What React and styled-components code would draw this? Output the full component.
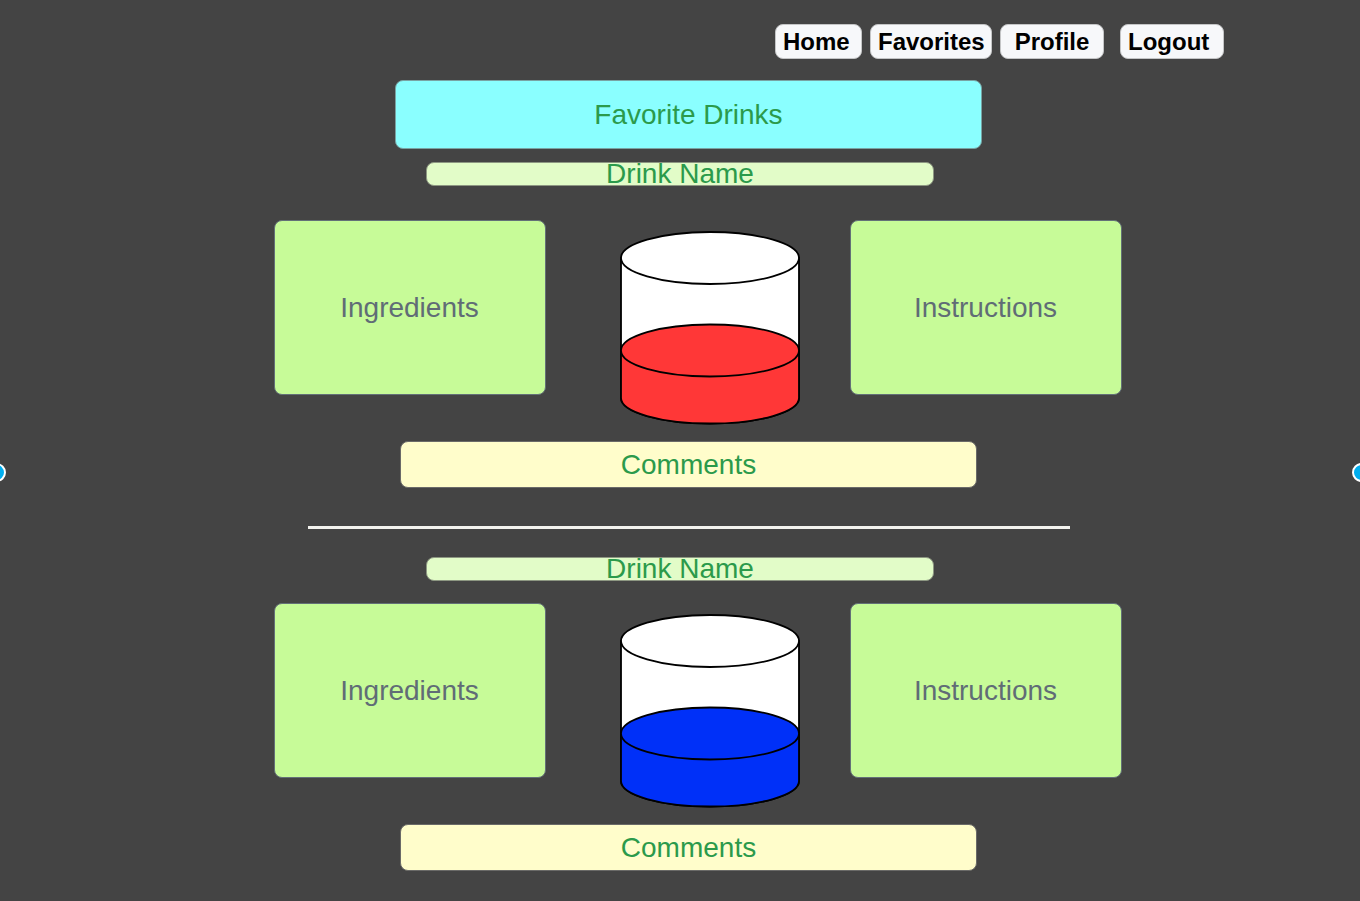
import React from "react";
import styled, { createGlobalStyle } from "styled-components";

const GlobalStyle = createGlobalStyle`
  *, *::before, *::after {
    box-sizing: border-box;
  }
  body {
    margin: 0;
    background: #444444;
    font-family: "Liberation Sans", Arial, Helvetica, sans-serif;
  }
`;

const Page = styled.div`
  position: relative;
  min-height: 100vh;
  padding: 24px 0 30px;
  overflow: hidden;
  background: #444444;
`;

const Nav = styled.nav`
  display: flex;
  justify-content: flex-end;
  gap: 8px;
  padding-right: 10%;
`;

const NavLink = styled.a`
  width: ${({ $width }) => $width}px;
  height: 35px;
  padding: 0 ${({ $align }) => ($align === "center" ? 0 : 7)}px;
  margin-left: ${({ $apart }) => ($apart ? 8 : 0)}px;
  border: 1px solid #c4c5c6;
  border-radius: 8px;
  background: #f7f8fa;
  color: #000000;
  font-size: 24px;
  font-weight: 700;
  line-height: 34px;
  text-align: ${({ $align }) => $align || "left"};
  text-decoration: none;
  white-space: nowrap;
`;

const Main = styled.main`
  display: flex;
  flex-direction: column;
  align-items: center;
  padding: 21px 0 0 17px;
`;

const Bar = styled.div`
  display: flex;
  align-items: center;
  justify-content: center;
  width: 100%;
  border: 1px solid #6a6a68;
  border-radius: 8px;
  color: #2b9a4b;
  font-size: 28px;
  font-weight: 400;
  line-height: 32px;
  white-space: nowrap;
`;

const Title = styled(Bar).attrs({ as: "h1" })`
  max-width: 587px;
  height: 69px;
  margin: 0 0 13px;
  background: #8affff;
  border-color: #79a3a3;
`;

const DrinkName = styled(Bar).attrs({ as: "h2" })`
  max-width: 508px;
  height: 24px;
  margin: 0;
  background: #e2fcc8;
  border-color: #8d9782;
`;

const Comments = styled(Bar)`
  max-width: 577px;
  height: 47px;
  background: #fffdcb;
`;

const Drink = styled.section`
  display: flex;
  flex-direction: column;
  align-items: center;
  width: 100%;
`;

const NameRow = styled.div`
  display: flex;
  justify-content: center;
  width: 100%;
  padding-right: 17px;
`;

const Recipe = styled.div`
  display: grid;
  grid-template-columns: 272px 1fr 272px;
  align-items: start;
  width: 100%;
  max-width: 866px;
  padding-left: 18px;
  margin: ${({ $top }) => $top}px 0 17px;
`;

const Card = styled.div`
  display: flex;
  align-items: center;
  justify-content: center;
  height: 175px;
  border: 1px solid #637077;
  border-radius: 8px;
  background: #c7fb98;
  color: #606c76;
  font-size: 28px;
  line-height: 32px;
`;

const GlassSlot = styled.div`
  display: flex;
  justify-content: center;
  padding: 11px 0 0 25px;
`;

const GlassDrawing = styled.svg`
  display: block;
  flex: none;
  overflow: visible;
  stroke: #000000;
  stroke-width: 1.8;
`;

const Divider = styled.hr`
  width: 100%;
  max-width: 762px;
  height: 3px;
  margin: 38px 0 28px;
  border: 0;
  background: #f2f2ee;
`;

const Handle = styled.span`
  position: absolute;
  top: 463px;
  ${({ $side }) => $side}: ${({ $side }) => ($side === "left" ? -13 : -11)}px;
  width: 19px;
  height: 19px;
  border: 2px solid #ffffff;
  border-radius: 50%;
  background: #00aeef;
`;

function Glass({ color, label }) {
  return (
    <GlassDrawing width="180" height="193" viewBox="0 0 180 193" role="img" aria-label={label}>
      <path d="M1 27V167A89 25.5 0 0 0 179 167V27Z" fill="#ffffff" />
      <path d="M1 119.500V167A89 25.500 0 0 0 179 167V119.500Z" fill={color} />
      <ellipse cx="90" cy="119.500" rx="89" ry="26" fill={color} />
      <ellipse cx="90" cy="27" rx="89" ry="26" fill="#ffffff" />
    </GlassDrawing>
  );
}

function DrinkEntry({ color, label, top }) {
  return (
    <Drink>
      <NameRow>
        <DrinkName>Drink Name</DrinkName>
      </NameRow>
      <Recipe $top={top}>
        <Card>Ingredients</Card>
        <GlassSlot>
          <Glass color={color} label={label} />
        </GlassSlot>
        <Card>Instructions</Card>
      </Recipe>
      <Comments>Comments</Comments>
    </Drink>
  );
}

export default function App() {
  return (
    <>
      <GlobalStyle />
      <Page>
        <Nav>
          <NavLink href="#home" $width={87}>Home</NavLink>
          <NavLink href="#favorites" $width={122}>Favorites</NavLink>
          <NavLink href="#profile" $width={104} $align="center">Profile</NavLink>
          <NavLink href="#logout" $width={104} $apart>Logout</NavLink>
        </Nav>
        <Main>
          <Title>Favorite Drinks</Title>
          <DrinkEntry color="#ff3737" label="Red drink" top={34} />
          <Divider />
          <DrinkEntry color="#0030f8" label="Blue drink" top={22} />
        </Main>
        <Handle $side="left" />
        <Handle $side="right" />
      </Page>
    </>
  );
}
